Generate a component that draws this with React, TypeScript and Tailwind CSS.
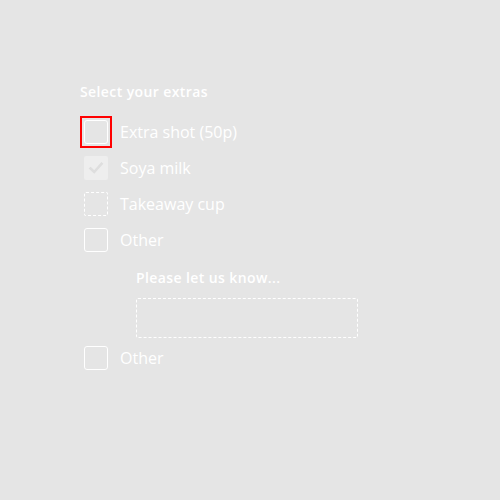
import React from "react";

function Box({ variant }: { variant: "focus" | "checked" | "dashed" | "plain" }) {
  if (variant === "checked") {
    return (
      <div className="w-6 h-6 rounded-[2px] bg-[#eeeeee] flex items-center justify-center shrink-0">
        <svg width="18" height="18" viewBox="0 0 18 18" fill="none">
          <path d="M3.5 9.5 L7.2 13 L14.5 4.8" stroke="#dedede" strokeWidth="2.6" strokeLinecap="square" />
        </svg>
      </div>
    );
  }
  if (variant === "dashed") {
    return <div className="w-6 h-6 rounded-[2px] border border-dashed border-white shrink-0" />;
  }
  if (variant === "focus") {
    return (
      <div className="relative w-6 h-6 shrink-0">
        <div className="w-6 h-6 rounded-[3px] border border-white" />
        <span className="absolute -inset-1 border-2 border-[#ff0000]" />
      </div>
    );
  }
  return <div className="w-6 h-6 rounded-[3px] border border-white shrink-0" />;
}

function Row({ variant, label }: { variant: "focus" | "checked" | "dashed" | "plain"; label: string }) {
  return (
    <div className="flex items-center h-6 gap-3">
      <Box variant={variant} />
      <span className="text-[16px] leading-6 text-white">{label}</span>
    </div>
  );
}

export default function App() {
  return (
    <div
      className="w-[500px] h-[500px] bg-[#e5e5e5] pl-[80px] pt-[82px]"
      style={{ fontFamily: '"Open Sans", "Noto Sans", sans-serif' }}
    >
      <div className="text-[14px] leading-5 font-semibold text-white tracking-[0.4px]">Select your extras</div>
      <div className="mt-[18px] ml-1 flex flex-col gap-3">
        <Row variant="focus" label="Extra shot (50p)" />
        <Row variant="checked" label="Soya milk" />
        <Row variant="dashed" label="Takeaway cup" />
        <Row variant="plain" label="Other" />
        <div className="ml-[52px] pt-[4px] -mb-1">
          <div className="text-[14px] leading-5 font-semibold text-white tracking-[0.4px]">Please let us know...</div>
          <div className="mt-[10px] w-[222px] h-[40px] border border-dashed border-white rounded-[2px]" />
        </div>
        <Row variant="plain" label="Other" />
      </div>
    </div>
  );
}
